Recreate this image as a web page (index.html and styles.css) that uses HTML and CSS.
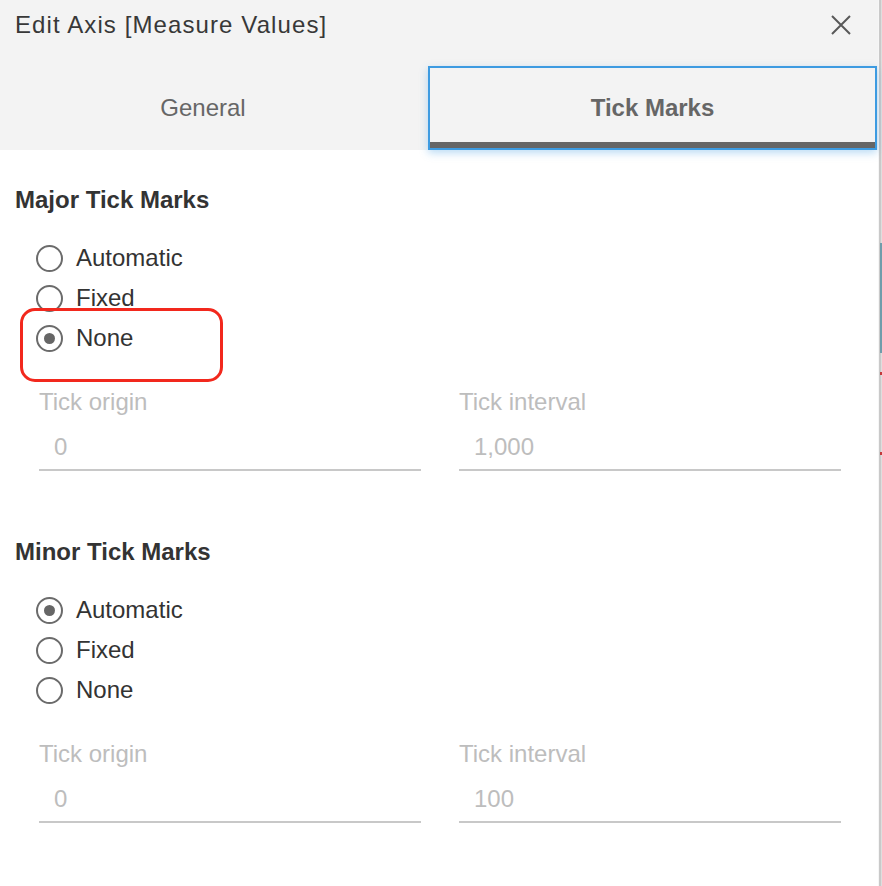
FILE: index.html
```html
<!DOCTYPE html>
<html lang="en">
<head>
<meta charset="utf-8">
<title>Edit Axis</title>
<link rel="stylesheet" href="styles.css">
</head>
<body>
<div class="page">
  <div class="dialog">
    <header class="head">
      <div class="titlebar">
        <h1 class="title">Edit Axis [Measure Values]</h1>
        <button class="close" aria-label="Close">
          <svg width="20" height="20" viewBox="0 0 20 20"><path d="M1 1 L19 19 M19 1 L1 19" stroke="#585858" stroke-width="2" fill="none"/></svg>
        </button>
      </div>
      <nav class="tabs">
        <div class="tab">General</div>
        <div class="tab active">Tick Marks</div>
      </nav>
    </header>
    <main class="content">
      <section class="group">
        <h2 class="group-title">Major Tick Marks</h2>
        <div class="radios">
          <label class="radio"><span class="dot"></span>Automatic</label>
          <label class="radio"><span class="dot"></span>Fixed</label>
          <label class="radio"><span class="dot on"></span>None</label>
        </div>
        <div class="fields">
          <div class="field">
            <div class="field-label">Tick origin</div>
            <div class="field-input">0</div>
          </div>
          <div class="field">
            <div class="field-label">Tick interval</div>
            <div class="field-input">1,000</div>
          </div>
        </div>
        <div class="highlight"></div>
      </section>
      <section class="group group-minor">
        <h2 class="group-title">Minor Tick Marks</h2>
        <div class="radios">
          <label class="radio"><span class="dot on"></span>Automatic</label>
          <label class="radio"><span class="dot"></span>Fixed</label>
          <label class="radio"><span class="dot"></span>None</label>
        </div>
        <div class="fields">
          <div class="field">
            <div class="field-label">Tick origin</div>
            <div class="field-input">0</div>
          </div>
          <div class="field">
            <div class="field-label">Tick interval</div>
            <div class="field-input">100</div>
          </div>
        </div>
      </section>
    </main>
  </div>
  <div class="scroll">
    <span class="thumb"></span>
    <span class="mark mark-1"></span>
    <span class="mark mark-2"></span>
  </div>
</div>
</body>
</html>
```
FILE: styles.css
```css
html, body {
  margin: 0;
  padding: 0;
  background: #fff;
}
body {
  font-family: "Liberation Sans", Arial, sans-serif;
  color: #333;
}
.page {
  display: flex;
  width: 882px;
  height: 886px;
  overflow: hidden;
}
.dialog {
  width: 878px;
  flex: none;
  background: #fff;
}
.head {
  background: #f3f3f3;
}
.titlebar {
  height: 66px;
  box-sizing: border-box;
  display: flex;
  justify-content: space-between;
  align-items: flex-start;
  padding: 10px 27px 0 15px;
}
.title {
  margin: 0;
  font-size: 24px;
  line-height: 30px;
  font-weight: normal;
  letter-spacing: 1.1px;
  color: #383838;
}
.close {
  margin-top: 5px;
  width: 20px;
  height: 20px;
  padding: 0;
  border: 0;
  background: none;
  display: block;
}
.close svg {
  display: block;
}
.tabs {
  display: grid;
  grid-template-columns: 406px 449px;
  column-gap: 22px;
  height: 84px;
}
.tab {
  display: flex;
  align-items: center;
  justify-content: center;
  font-size: 24px;
  color: #666;
  box-sizing: border-box;
}
.tab.active {
  border: 2px solid #3d9be1;
  font-weight: bold;
  box-shadow: inset 0 -6px 0 #666, 0 3px 8px rgba(61, 155, 225, 0.35);
  position: relative;
  z-index: 1;
}
.content {
  padding: 34px 37px 0 15px;
}
.group {
  position: relative;
}
.group-minor {
  margin-top: 65px;
}
.group-title {
  margin: 0;
  font-size: 24px;
  line-height: 32px;
  font-weight: bold;
  color: #333;
}
.radios {
  margin: 22px 0 0 21px;
  display: flex;
  flex-direction: column;
}
.radio {
  display: flex;
  align-items: center;
  gap: 13px;
  height: 40px;
  font-size: 24px;
  color: #333;
}
.dot {
  width: 27px;
  height: 27px;
  box-sizing: border-box;
  border: 2px solid #6b6b6b;
  border-radius: 50%;
  display: flex;
  align-items: center;
  justify-content: center;
  background: #fff;
}
.dot.on::after {
  content: "";
  width: 11px;
  height: 11px;
  border-radius: 50%;
  background: #666;
}
.fields {
  display: grid;
  grid-template-columns: 1fr 1fr;
  column-gap: 38px;
  margin: 30px 0 0 24px;
}
.field-label {
  font-size: 24px;
  line-height: 28px;
  color: #bdbdbd;
}
.field-input {
  margin-top: 8px;
  padding: 9px 0 8px 15px;
  font-size: 24px;
  line-height: 28px;
  color: #bdbdbd;
  border-bottom: 2px solid #c8c8c8;
}
.highlight {
  position: absolute;
  left: 5px;
  top: 124px;
  width: 203px;
  height: 74px;
  box-sizing: border-box;
  border: 3.5px solid #f2281d;
  border-radius: 15px;
}
.scroll {
  width: 4px;
  flex: none;
  position: relative;
  background: linear-gradient(to right, #f6f6f6 0 1px, #c9c9c9 1px 3px, #dedede 3px);
}
.thumb {
  position: absolute;
  left: 2px;
  top: 243px;
  width: 2px;
  height: 110px;
  background: #6f9dab;
}
.mark {
  position: absolute;
  left: 2px;
  width: 2px;
  height: 3px;
  background: #c2393b;
}
.mark-1 {
  top: 372px;
}
.mark-2 {
  top: 452px;
}
```
